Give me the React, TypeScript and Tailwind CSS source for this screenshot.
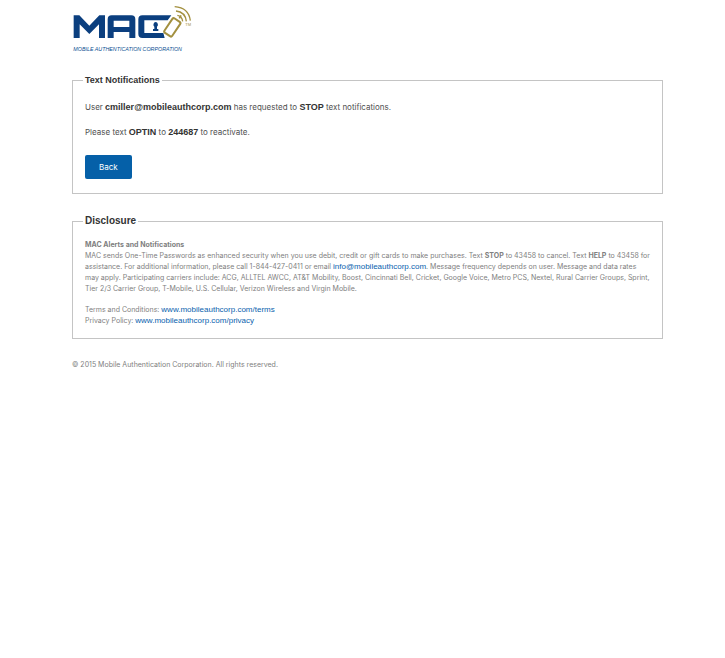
import type { ReactNode } from "react";

function Logo() {
  return (
    <svg viewBox="18 0 384 168" className="block h-14 w-32" role="img" aria-label="Mobile Authentication Corporation">
      <g fill="#0b3f7f">
        <path d="M23 114V46h17l30 31 30-31h17v68h-18V73L70 102 41 73v41z" />
        <path d="M125 114V58q0-12 12-12h59q12 0 12 12v56h-18V96h-47v18zM143 62v19h47V62z" fillRule="evenodd" />
        <path d="M217 58q0-12 12-12h87l-11 15h-70v38h57l4 15h-67q-12 0-12-12z" />
        <path d="M269 66a8 8 0 0 1 4 14v7h4v6h-16v-6h4v-7a8 8 0 0 1 4-14z" />
      </g>
      <g fill="none" stroke="#a3903f">
        <rect x="-14" y="-26" width="28" height="52" rx="5" strokeWidth="6" transform="translate(319 82) rotate(34)" />
        <path d="M340 55l5-9" strokeWidth="5" />
        <path d="M334 46q14 2 16 18M330 33q28 3 31 31M326 20q42 3 47 42" strokeWidth="4" />
      </g>
      <text x="358" y="79" fontSize="12" fill="#a3903f" fontFamily="Liberation Sans, sans-serif">TM</text>
      <text x="22" y="153" fontSize="16" fontStyle="italic" fill="#0b4f92" fontFamily="Liberation Sans, sans-serif">
        MOBILE AUTHENTICATION CORPORATION
      </text>
    </svg>
  );
}

function Panel({ title, titleClass, className, children }: { title: string; titleClass: string; className: string; children: ReactNode }) {
  return (
    <fieldset className={`border border-[#c4c4c4] px-3 ${className}`}>
      <legend className={`-ml-0.5 px-0.5 font-['Liberation_Sans',Arial,sans-serif] font-bold text-[#333] ${titleClass}`}>{title}</legend>
      {children}
    </fieldset>
  );
}

function Strong({ children }: { children: ReactNode }) {
  return <b className="font-['Liberation_Sans',Arial,sans-serif] text-[9px] text-[#333]">{children}</b>;
}

function Mail({ href, children }: { href: string; children: ReactNode }) {
  return <a href={href} className="font-['Liberation_Sans',Arial,sans-serif] text-[8px] text-[#0862ae] hover:underline">{children}</a>;
}

export default function App() {
  return (
    <div className="min-h-screen bg-white">
      <main className="mr-[62px] ml-[72px]">
        <Logo />
        <Panel title="Text Notifications" titleClass="text-[9px] leading-3" className="mt-[18px] pb-3.5 font-[Inter,sans-serif] text-[8px] leading-[13px] text-[#505050]">
          <p className="mt-[15px]">
            User <Strong>cmiller@mobileauthcorp.com</Strong> has requested to <Strong>STOP</Strong> text notifications.
          </p>
          <p className="mt-3">
            Please text <Strong>OPTIN</Strong> to <Strong>244687</Strong> to reactivate.
          </p>
          <button type="button" className="mt-4 block h-6 rounded-xs bg-[#0560a8] px-3.5 text-[8px] text-white">Back</button>
        </Panel>
        <Panel title="Disclosure" titleClass="text-[10px] leading-3" className="mt-[21px] pb-3 font-[Inter,sans-serif] text-[7px] leading-[11px] text-[#808080]">
          <h2 className="mt-3 font-bold">MAC Alerts and Notifications</h2>
          <p>
            MAC sends One-Time Passwords as enhanced security when you use debit, credit or gift cards to make purchases. Text <b>STOP</b> to 43458 to cancel. Text <b>HELP</b> to 43458 for assistance. For additional information, please call 1-844-427-0411 or email{" "}
            <Mail href="mailto:info@mobileauthcorp.com">info@mobileauthcorp.com</Mail>. Message frequency depends on user. Message and data rates may apply. Participating carriers include: ACG, ALLTEL AWCC, AT&amp;T Mobility, Boost, Cincinnati Bell, Cricket, Google Voice, Metro PCS, Nextel, Rural Carrier Groups, Sprint, Tier 2/3 Carrier Group, T-Mobile, U.S. Cellular, Verizon Wireless and Virgin Mobile.
          </p>
          <p className="mt-2.5">
            Terms and Conditions: <Mail href="http://www.mobileauthcorp.com/terms">www.mobileauthcorp.com/terms</Mail>
            <br />
            Privacy Policy: <Mail href="http://www.mobileauthcorp.com/privacy">www.mobileauthcorp.com/privacy</Mail>
          </p>
        </Panel>
        <footer className="mt-5 font-[Inter,sans-serif] text-[7px] leading-[11px] text-[#808080]">© 2015 Mobile Authentication Corporation. All rights reserved.</footer>
      </main>
    </div>
  );
}
